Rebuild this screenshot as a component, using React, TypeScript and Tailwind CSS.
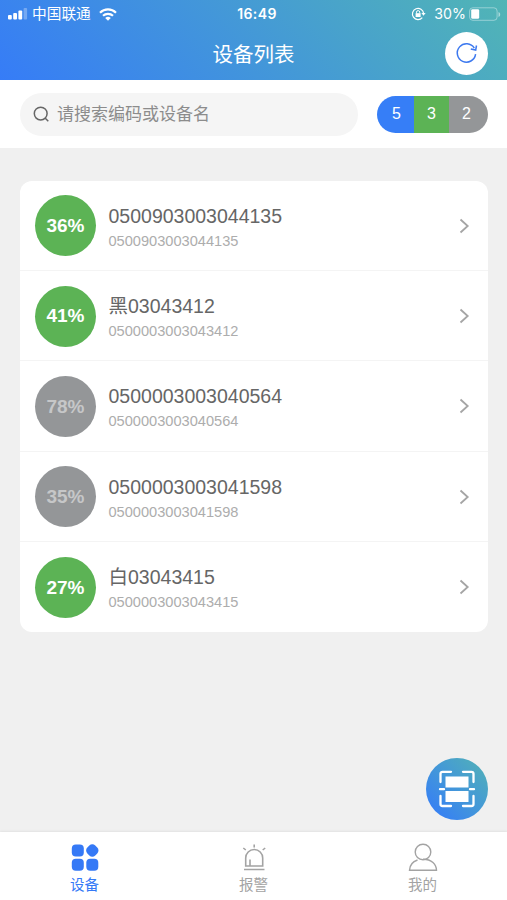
import React from "react";

type Device = { level: string; name: string; code: string; online: boolean };

const devices: Device[] = [
  { level: "36%", name: "0500903003044135", code: "0500903003044135", online: true },
  { level: "41%", name: "黑03043412", code: "0500003003043412", online: true },
  { level: "78%", name: "0500003003040564", code: "0500003003040564", online: false },
  { level: "35%", name: "0500003003041598", code: "0500003003041598", online: false },
  { level: "27%", name: "白03043415", code: "0500003003043415", online: true },
];

function StatusBar() {
  return (
    <div className="grid h-7 grid-cols-3 items-center pl-2 pr-[6px] text-white">
      <div className="flex items-center">
        <svg width="21" height="12" viewBox="0 0 21 12" fill="currentColor">
          <rect x="0" y="7" width="3.8" height="4.5" rx="1" />
          <rect x="5.2" y="5" width="3.8" height="6.500" rx="1" />
          <rect x="10.400" y="2.500" width="3.800" height="9" rx="1" />
          <rect x="15.600" y="0" width="3.500" height="11.500" rx="1" opacity=".3" />
        </svg>
        <span className="ml-[3px] whitespace-nowrap text-[14.7px] leading-5">中国联通</span>
        <svg className="ml-2" width="18" height="13" viewBox="0 0 18 13" fill="none" stroke="currentColor" strokeWidth="2.2">
          <path d="M1 4.7a11.5 11.5 0 0 1 16 0" />
          <path d="M4 7.8a7.2 7.2 0 0 1 10 0" />
          <path d="M6.2 10a4 4 0 0 1 5.6 0L9 12.8Z" fill="currentColor" stroke="none" />
        </svg>
      </div>
      <div className="pl-[5px] text-center font-[Inter] text-[14px] font-semibold leading-5 tracking-[0.4px]">16:49</div>
      <div className="flex items-center justify-end">
        <svg width="15" height="14" viewBox="0 0 15 14" fill="none" stroke="currentColor" strokeWidth="1.2">
          <path d="M11.3 10.6A5.6 5.6 0 1 1 12.6 6.4" />
          <path d="M10.4 6H14.6L12.5 8.8Z" fill="currentColor" stroke="none" />
          <rect x="4.6" y="6.2" width="5" height="3.8" fill="currentColor" stroke="none" />
          <path d="M5.5 6.4V5.2a1.6 1.6 0 0 1 3.2 0v1.2" strokeWidth="1" />
        </svg>
        <span className="ml-2 font-[Inter] text-[14.2px] leading-5">30%</span>
        <svg className="ml-[3px]" width="32" height="15" viewBox="0 0 32 15" fill="none">
          <rect x=".6" y=".8" width="27.5" height="12.500" rx="3.2" stroke="white" strokeOpacity=".4" />
          <rect x="2.2" y="2.2" width="8" height="9.6" rx="1.4" fill="white" />
          <path d="M29.5 5v5c1.2-.5 1.7-1.4 1.7-2.5S30.700 5.500 29.500 5Z" fill="white" fillOpacity=".5" />
        </svg>
      </div>
    </div>
  );
}

function DeviceRow({ device, last }: { device: Device; last: boolean }) {
  return (
    <li className={`flex h-[90.4px] items-center border-b pl-[15px] pr-[18px] pt-px ${last ? "border-transparent" : "border-[#f4f4f4]"}`}>
      <div
        className={`flex size-[61px] shrink-0 items-center justify-center rounded-full pt-px text-[19px] font-bold ${
          device.online ? "bg-[#5cb355] text-white" : "bg-[#949698] text-[#c6c7c8]"
        }`}
      >
        {device.level}
      </div>
      <div className="ml-3 flex-1 pt-[2px]">
        <div className="h-7 pl-[0.5px] text-[19.5px] leading-7 text-[#666]">{device.name}</div>
        <div className="h-[22px] pl-[0.5px] text-[14.6px] leading-[22px] text-[#adadad]">{device.code}</div>
      </div>
      <svg width="11" height="16" viewBox="0 0 11 16" fill="none" stroke="#a5a5a5" strokeWidth="1.8">
        <path d="M1.5 1.5 8.700 8l-7.200 6.500" />
      </svg>
    </li>
  );
}

function TabItem({ label, active, children }: { label: string; active?: boolean; children: React.ReactNode }) {
  return (
    <button className={`flex flex-1 flex-col items-center pt-[11px] ${active ? "text-[#3579f6]" : "text-[#a3a3a3]"}`}>
      {children}
      <span className="mt-1 text-[14.5px] leading-5">{label}</span>
    </button>
  );
}

export default function App() {
  return (
    <div className="relative flex h-[900px] w-[507px] flex-col overflow-hidden bg-[#f0f0f0] font-['Liberation_Sans','Noto_Sans_CJK_SC',sans-serif]">
      <header className="h-20 shrink-0 bg-[linear-gradient(45deg,#367cf7_0%,#4397d9_48%,#51b5b5_100%)]">
        <StatusBar />
        <div className="grid h-[50px] grid-cols-[1fr_auto_1fr] items-center pr-[19px] text-white">
          <span />
          <h1 className="pl-[19px] pt-[3px] text-[20.5px] leading-7">设备列表</h1>
          <button className="flex size-[43px] items-center justify-center justify-self-end rounded-full bg-white">
            <svg width="24" height="24" viewBox="0 0 24 24" fill="none" stroke="#3d79ef" strokeWidth="1.5">
              <path d="M20.600 13.200A9.200 9.200 0 1 1 19.300 7.100" />
              <path d="M21.500 4.500 20.700 9 15.800 8" />
            </svg>
          </button>
        </div>
      </header>

      <section className="flex h-[67.5px] shrink-0 items-center bg-white pl-5 pr-[19px]">
        <div className="mt-px flex h-[43px] w-[338px] items-center rounded-full bg-[#f5f5f5] pl-[13px]">
          <svg width="17" height="17" viewBox="0 0 17 17" fill="none" stroke="#666" strokeWidth="1.5">
            <circle cx="7.7" cy="7.6" r="6.4" />
            <path d="m12 12 3.300 3.300" />
          </svg>
          <span className="ml-[7px] pt-px text-[17px] leading-6 text-[#8c8c8c]">请搜索编码或设备名</span>
        </div>
        <div className="ml-auto mt-px flex h-[37px] w-[111px] overflow-hidden rounded-full text-[16px] text-white">
          <span className="flex flex-1 items-center justify-center bg-[#367ef7] pl-0.5">5</span>
          <span className="flex flex-1 items-center justify-center bg-[#5cb355]">3</span>
          <span className="flex flex-1 items-center justify-center bg-[#949698] pr-1">2</span>
        </div>
      </section>

      <main className="flex-1 pl-5 pr-[19px] pt-[33px]">
        <ul className="overflow-hidden rounded-xl bg-white">
          {devices.map((device, i) => (
            <DeviceRow key={device.code} device={device} last={i === devices.length - 1} />
          ))}
        </ul>
      </main>

      <button className="absolute bottom-20 right-[19px] flex size-[62px] items-center justify-center rounded-full bg-[linear-gradient(45deg,#367ff5_10%,#4397d9_50%,#51b0b8_95%)]">
        <svg width="38" height="38" viewBox="0 0 38 38" fill="none" stroke="white" strokeWidth="2.3" strokeLinecap="round" strokeLinejoin="round">
          <path d="M13 1.800H4.500a2 2 0 0 0-2 2V12M25 1.800h8.500a2 2 0 0 1 2 2V12M2.500 26v8a2 2 0 0 0 2 2H13M35.500 26v8a2 2 0 0 1-2 2H25" />
          <path d="M7.500 6.500h23v11h-23ZM7.500 21h23v11h-23Z" fill="white" stroke="none" />
          <path d="M2 19.200h4M32 19.200h4" />
        </svg>
      </button>

      <nav className="flex h-[68px] shrink-0 bg-white shadow-[0_-1px_2px_rgba(0,0,0,0.06)]">
        <TabItem label="设备" active>
          <svg width="28" height="28" viewBox="0 0 28 28" fill="currentColor">
            <rect x=".8" y="1.5" width="12" height="12" rx="4" />
            <rect x="15.7" y="1.900" width="11.200" height="11.200" rx="4.200" transform="rotate(45 21.300 7.500)" />
            <rect x=".8" y="15.800" width="12" height="12" rx="4" />
            <rect x="15.300" y="15.800" width="12" height="12" rx="4" />
          </svg>
        </TabItem>
        <TabItem label="报警">
          <svg width="28" height="28" viewBox="0 0 28 28" fill="none" stroke="currentColor" strokeWidth="1.6">
            <path d="M5.700 23V15a8.500 8.500 0 0 1 17 0V23ZM4 26.500h20.500M10 16.500V22.500M14.200 1.500v3M3.300 5l2.500 2M25.200 5l-2.500 2" />
          </svg>
        </TabItem>
        <TabItem label="我的">
          <svg width="30" height="28" viewBox="0 0 30 28" fill="none" stroke="currentColor" strokeWidth="1.4">
            <circle cx="15" cy="9" r="7.800" />
            <path d="M9.500 17C4.500 18.700 1.700 22.300 1.500 27.300h27c-.2-6-4.700-11-13.500-11" />
          </svg>
        </TabItem>
      </nav>
    </div>
  );
}
